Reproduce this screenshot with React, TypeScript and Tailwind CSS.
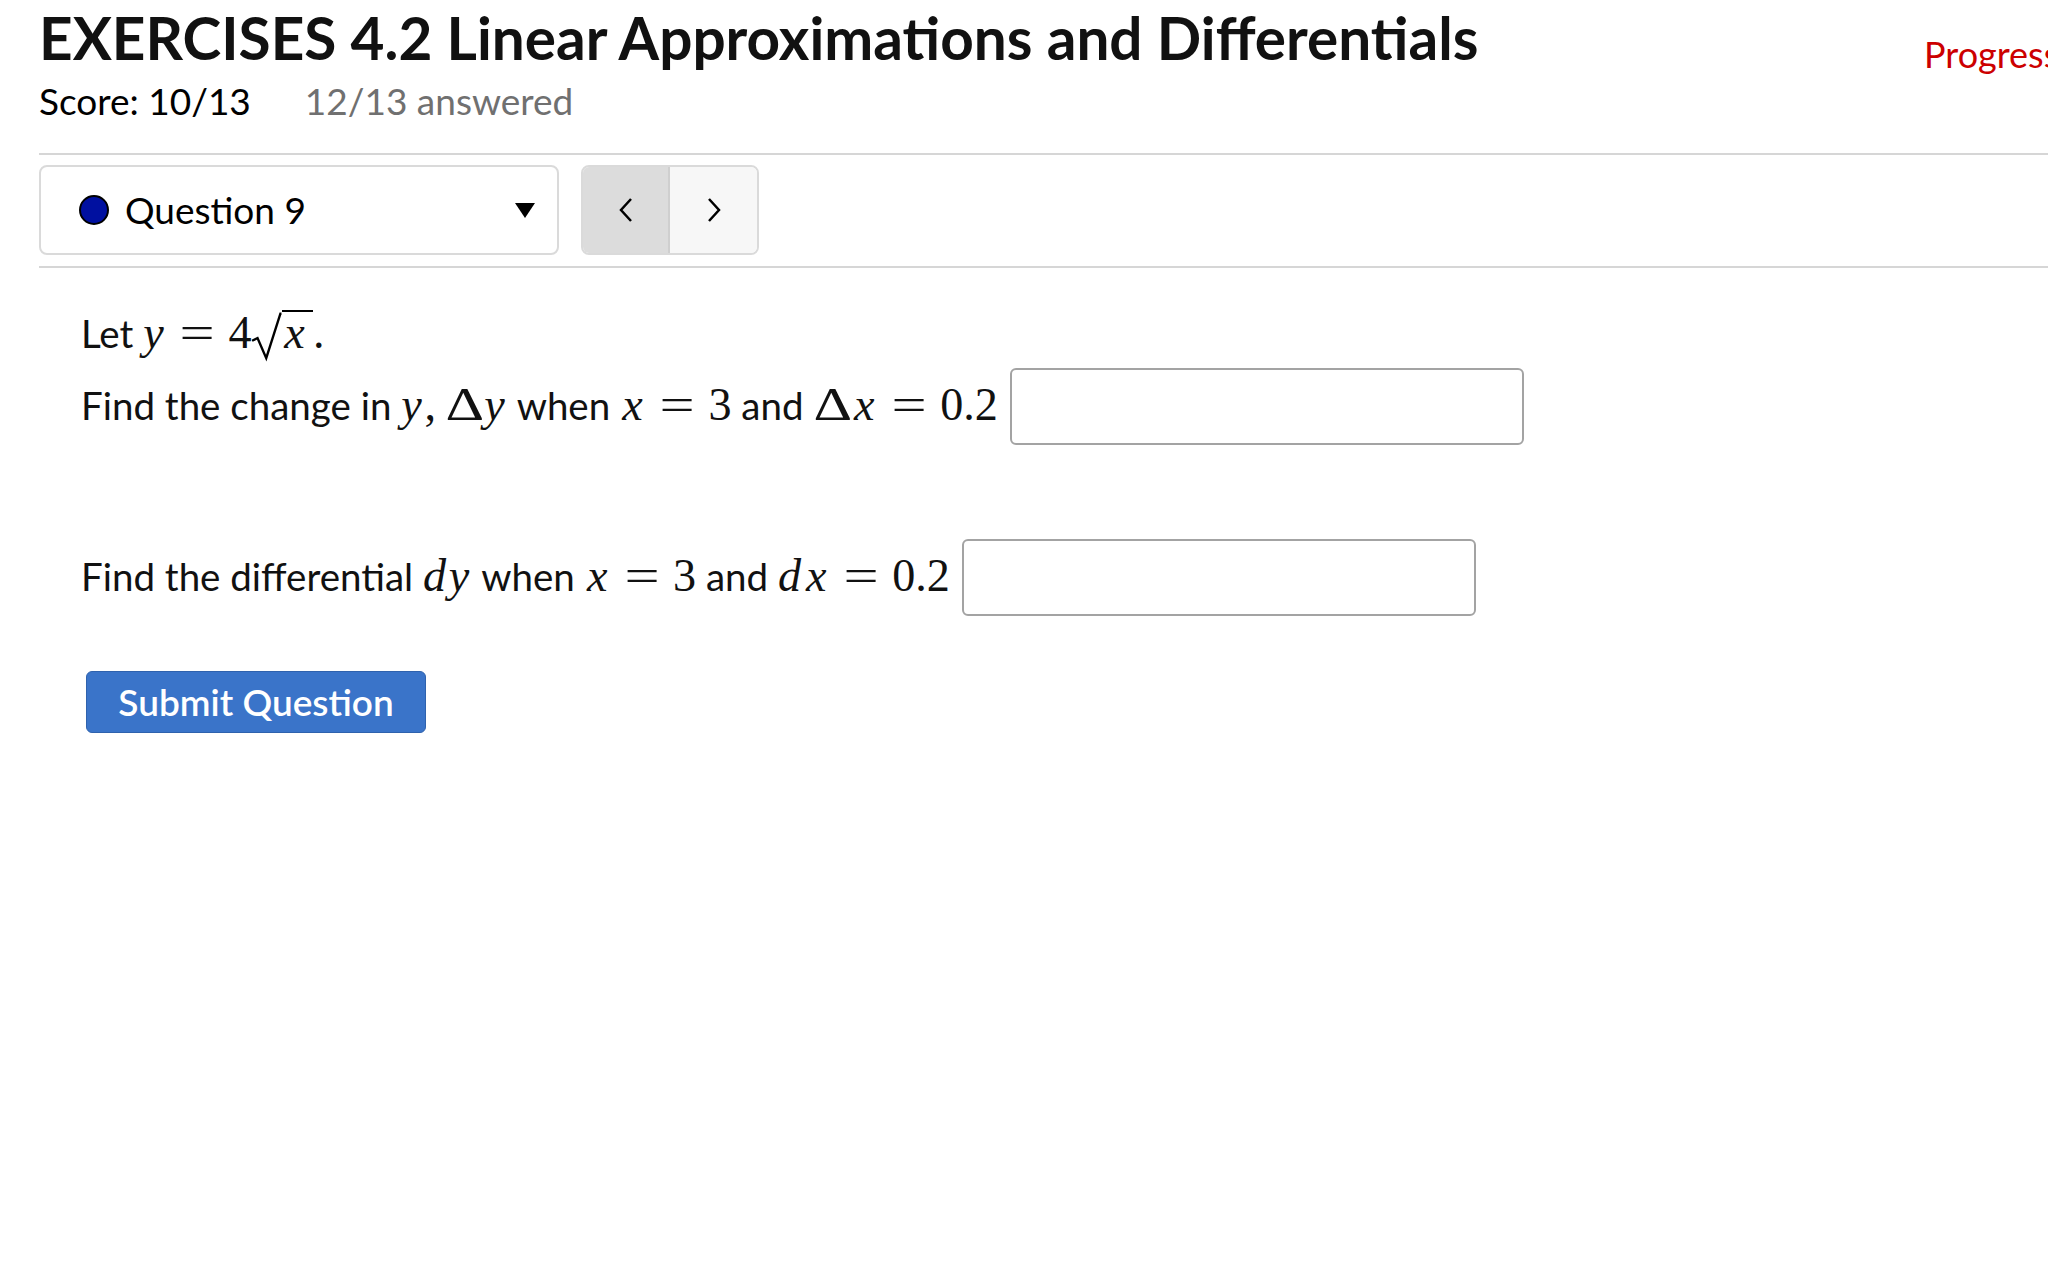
import React from "react";

const mathFont = "[font-family:'Liberation_Serif',serif] text-[1.2em] leading-none";

// extra space so Times italics take the width of TeX's math italics
const italicPad: { [key: string]: string } = {
  x: "pl-[0.05em] pr-[0.08em]",
  y: "pr-[0.06em]",
  d: "pr-[0.06em]",
};

function V({ children }: { children: string }) {
  return (
    <span className={`${mathFont} italic`}>
      {children.split("").map((ch, i) => (
        <span key={i} className={italicPad[ch] ?? ""}>
          {ch}
        </span>
      ))}
    </span>
  );
}

function N({ children }: { children: React.ReactNode }) {
  return <span className={mathFont}>{children}</span>;
}

function Delta() {
  return (
    <span className={`${mathFont} inline-block w-[0.83em] text-center`}>
      <span className="inline-block scale-x-[1.3]">Δ</span>
    </span>
  );
}

// "=" in TeX is wider than the Times glyph, so stretch it a little
function Eq() {
  return (
    <span className={`${mathFont} inline-block w-[0.78em] mx-[0.28em] text-center`}>
      <span className="inline-block scale-x-[1.35]">=</span>
    </span>
  );
}

function Sqrt({ children }: { children: string }) {
  return (
    <span className={mathFont}>
      <svg viewBox="0 0 28 44" className="inline h-[1.1em] w-[0.66em] align-[-0.3em]">
        <path d="M1 26 L6 23.5 L14 42 L27 1.2 L28 1.2" fill="none" stroke="#000" strokeWidth="2.2" />
      </svg>
      <span className="inline-block border-t-2 border-black leading-[0.9] italic pl-[0.05em] pr-[0.18em]">
        {children}
      </span>
    </span>
  );
}

function AnswerBox({ width }: { width: string }) {
  return (
    <input
      type="text"
      className={`${width} h-[77px] ml-[12px] shrink-0 rounded-[6px] border-2 border-[#a3a3a3] bg-white outline-none`}
    />
  );
}

export default function App() {
  return (
    <div className="w-full min-h-screen overflow-hidden bg-white text-black [font-family:Lato,sans-serif]">
      <div className="w-[2120px] pl-[39px]">
        <div className="flex items-start pt-[2px]">
          <h1 className="w-[1885px] shrink-0 text-[58.5px] leading-[70px] font-bold text-[#111]">
            EXERCISES 4.2 Linear Approximations and Differentials
          </h1>
          <span className="mt-[30px] text-[36px] leading-[44px] text-[#cc0000] whitespace-nowrap">
            Progress
          </span>
        </div>
        <div className="flex gap-[54px] text-[37px] leading-[44px] mt-[3px]">
          <span>Score: 10/13</span>
          <span className="text-[#707070]">12/13 answered</span>
        </div>

        <div className="mt-[30px] border-t-2 border-[#d6d6d6]" />

        <div className="flex gap-[22px] pt-[10px] pb-[11px]">
          <div className="w-[520px] h-[90px] rounded-[8px] border-2 border-[#dadada] bg-white flex items-center pl-[38px] pr-[22px]">
            <span className="w-[30px] h-[30px] rounded-full bg-[#0010a0] border-2 border-black shrink-0" />
            <span className="ml-[16px] text-[37px] flex-1">Question 9</span>
            <svg width="20" height="15" viewBox="0 0 20 15">
              <path d="M0 0 H20 L10 15 Z" fill="#000" />
            </svg>
          </div>
          <div className="flex h-[90px] rounded-[8px] border-2 border-[#dadada] overflow-hidden">
            <button className="w-[87px] bg-[#dcdcdc] border-r-2 border-[#cfcfcf] flex items-center justify-center">
              <svg width="16" height="26" viewBox="0 0 16 26">
                <path d="M13 2 L3 13 L13 24" fill="none" stroke="#000" strokeWidth="2.5" />
              </svg>
            </button>
            <button className="w-[87px] bg-[#f7f7f7] flex items-center justify-center">
              <svg width="16" height="26" viewBox="0 0 16 26">
                <path d="M3 2 L13 13 L3 24" fill="none" stroke="#000" strokeWidth="2.5" />
              </svg>
            </button>
          </div>
        </div>

        <div className="border-t-2 border-[#d6d6d6]" />

        <div className="pl-[42px] pt-[41px] text-[38.5px] text-[#111]">
          <p className="leading-[48px] whitespace-nowrap">
            Let <V>y</V>
            <Eq />
            <N>4</N>
            <Sqrt>x</Sqrt>
            <N>.</N>
          </p>

          <div className="flex items-center mt-[6px]">
            <span className="whitespace-nowrap">
              Find the change in <V>y</V>
              <N>,</N> <Delta />
              <V>y</V> when <V>x</V>
              <Eq />
              <N>3</N> and <Delta />
              <V>x</V>
              <Eq />
              <N>0.2</N>
            </span>
            <AnswerBox width="w-[514px]" />
          </div>

          <div className="flex items-center mt-[94px]">
            <span className="whitespace-nowrap">
              Find the differential <V>dy</V> when <V>x</V>
              <Eq />
              <N>3</N> and <V>dx</V>
              <Eq />
              <N>0.2</N>
            </span>
            <AnswerBox width="w-[514px]" />
          </div>

          <button className="mt-[55px] ml-[5px] w-[340px] h-[62px] rounded-[6px] bg-[#3a74c9] border border-[#2f62ad] text-white text-[37px] font-semibold">
            Submit Question
          </button>
        </div>
      </div>
    </div>
  );
}
